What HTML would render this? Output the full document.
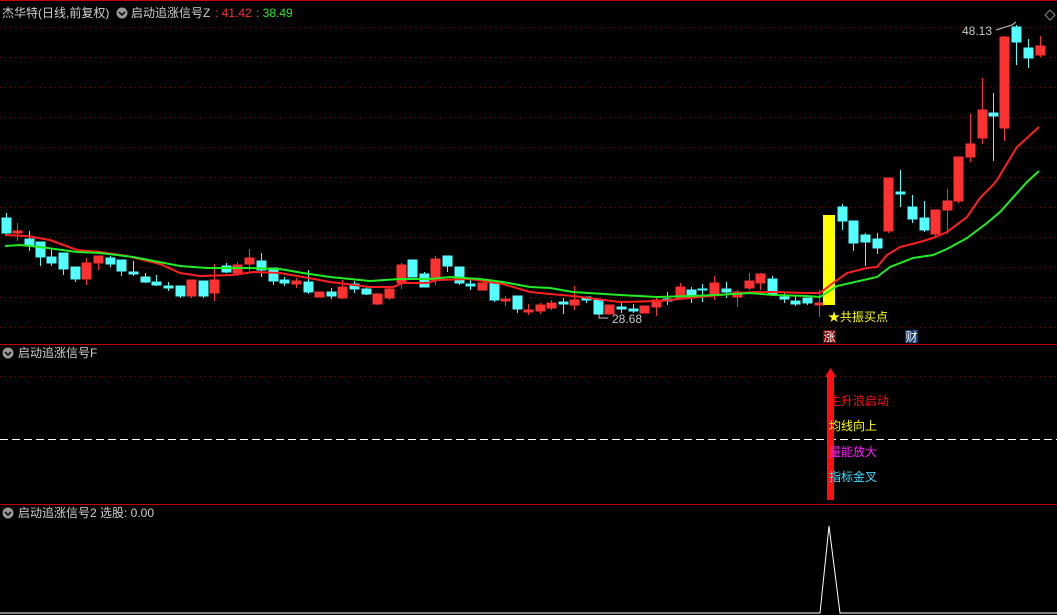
<!DOCTYPE html>
<html><head><meta charset="utf-8"><style>
html,body{margin:0;padding:0;background:#000;width:1057px;height:615px;overflow:hidden}
svg{display:block}
text{font-family:"Liberation Sans","Noto Sans CJK SC",sans-serif;font-size:12px}
</style></head><body>
<svg width="1057" height="615" viewBox="0 0 1057 615" xmlns="http://www.w3.org/2000/svg">
<rect width="1057" height="615" fill="#000"/>
<g stroke="#8a0000" stroke-width="1" stroke-dasharray="1,4">
<line x1="0" y1="27.5" x2="1057" y2="27.5"/><line x1="0" y1="57.5" x2="1057" y2="57.5"/><line x1="0" y1="87.5" x2="1057" y2="87.5"/><line x1="0" y1="117.5" x2="1057" y2="117.5"/><line x1="0" y1="147.5" x2="1057" y2="147.5"/><line x1="0" y1="177.5" x2="1057" y2="177.5"/><line x1="0" y1="207.5" x2="1057" y2="207.5"/><line x1="0" y1="237.5" x2="1057" y2="237.5"/><line x1="0" y1="267.5" x2="1057" y2="267.5"/><line x1="0" y1="297.5" x2="1057" y2="297.5"/><line x1="0" y1="327.5" x2="1057" y2="327.5"/>
<line x1="0" y1="376.5" x2="1057" y2="376.5"/>
</g>
<line x1="0" y1="344.5" x2="1057" y2="344.5" stroke="#c00000"/>
<line x1="0" y1="504.5" x2="1057" y2="504.5" stroke="#c00000"/>
<line x1="0" y1="0.5" x2="1057" y2="0.5" stroke="#c00000"/>
<line x1="0" y1="439.5" x2="1057" y2="439.5" stroke="#fff" stroke-dasharray="8,4"/>
<g fill="#54ffff" stroke="#54ffff">
<line x1="6.5" y1="213" x2="6.5" y2="236"/><rect x="2" y="218" width="9" height="15"/>
<line x1="29.5" y1="231" x2="29.5" y2="251"/><rect x="25" y="239" width="9" height="7"/>
<line x1="40.5" y1="242" x2="40.5" y2="266"/><rect x="36" y="242" width="9" height="15"/>
<line x1="51.5" y1="248" x2="51.5" y2="266"/><rect x="47" y="257" width="9" height="6"/>
<line x1="63.5" y1="253" x2="63.5" y2="275"/><rect x="59" y="253" width="9" height="16"/>
<line x1="75.5" y1="267" x2="75.5" y2="282"/><rect x="71" y="267" width="9" height="12"/>
<line x1="110.5" y1="256" x2="110.5" y2="267"/><rect x="106" y="258" width="9" height="6"/>
<line x1="121.5" y1="260" x2="121.5" y2="276"/><rect x="117" y="260" width="9" height="11"/>
<line x1="133.5" y1="261" x2="133.5" y2="276"/><rect x="129" y="272" width="9" height="2"/>
<line x1="145.5" y1="273" x2="145.5" y2="283"/><rect x="141" y="277" width="9" height="5"/>
<line x1="156.5" y1="275" x2="156.5" y2="286"/><rect x="152" y="282" width="9" height="3"/>
<line x1="168.5" y1="282" x2="168.5" y2="291"/><rect x="164" y="286" width="9" height="2"/>
<line x1="180.5" y1="286" x2="180.5" y2="298"/><rect x="176" y="286" width="9" height="10"/>
<line x1="203.5" y1="281" x2="203.5" y2="298"/><rect x="199" y="281" width="9" height="15"/>
<line x1="226.5" y1="263" x2="226.5" y2="273"/><rect x="222" y="266" width="9" height="6"/>
<line x1="261.5" y1="253" x2="261.5" y2="277"/><rect x="257" y="261" width="9" height="9"/>
<line x1="273.5" y1="268" x2="273.5" y2="285"/><rect x="269" y="268" width="9" height="13"/>
<line x1="284.5" y1="277" x2="284.5" y2="286"/><rect x="280" y="280" width="9" height="3"/>
<line x1="308.5" y1="270" x2="308.5" y2="294"/><rect x="304" y="282" width="9" height="10"/>
<line x1="331.5" y1="288" x2="331.5" y2="299"/><rect x="327" y="292" width="9" height="4"/>
<line x1="354.5" y1="281" x2="354.5" y2="293"/><rect x="350" y="284" width="9" height="5"/>
<line x1="366.5" y1="286" x2="366.5" y2="295"/><rect x="362" y="289" width="9" height="5"/>
<line x1="412.5" y1="260" x2="412.5" y2="277"/><rect x="408" y="260" width="9" height="17"/>
<line x1="424.5" y1="272" x2="424.5" y2="287"/><rect x="420" y="274" width="9" height="13"/>
<line x1="447.5" y1="256" x2="447.5" y2="272"/><rect x="443" y="256" width="9" height="10"/>
<line x1="459.5" y1="267" x2="459.5" y2="285"/><rect x="455" y="267" width="9" height="16"/>
<line x1="470.5" y1="279" x2="470.5" y2="290"/><rect x="466" y="284" width="9" height="2"/>
<line x1="494.5" y1="282" x2="494.5" y2="302"/><rect x="490" y="282" width="9" height="18"/>
<line x1="517.5" y1="296" x2="517.5" y2="313"/><rect x="513" y="296" width="9" height="13"/>
<line x1="563.5" y1="298" x2="563.5" y2="314"/><rect x="559" y="302" width="9" height="2"/>
<line x1="586.5" y1="297" x2="586.5" y2="303"/><rect x="582" y="297" width="9" height="3"/>
<line x1="598.5" y1="300" x2="598.5" y2="314"/><rect x="594" y="300" width="9" height="14"/>
<line x1="621.5" y1="303" x2="621.5" y2="313"/><rect x="617" y="307" width="9" height="2"/>
<line x1="633.5" y1="304" x2="633.5" y2="313"/><rect x="629" y="309" width="9" height="2"/>
<line x1="667.5" y1="292" x2="667.5" y2="305"/><rect x="663" y="299" width="9" height="2"/>
<line x1="691.5" y1="287" x2="691.5" y2="303"/><rect x="687" y="290" width="9" height="7"/>
<line x1="702.5" y1="284" x2="702.5" y2="302"/><rect x="698" y="289" width="9" height="1"/>
<line x1="726.5" y1="282" x2="726.5" y2="298"/><rect x="722" y="289" width="9" height="3"/>
<line x1="772.5" y1="276" x2="772.5" y2="295"/><rect x="768" y="279" width="9" height="16"/>
<line x1="784.5" y1="293" x2="784.5" y2="303"/><rect x="780" y="297" width="9" height="2"/>
<line x1="795.5" y1="296" x2="795.5" y2="306"/><rect x="791" y="301" width="9" height="3"/>
<line x1="807.5" y1="298" x2="807.5" y2="305"/><rect x="803" y="298" width="9" height="5"/>
<line x1="842.5" y1="204" x2="842.5" y2="230"/><rect x="838" y="207" width="9" height="14"/>
<line x1="853.5" y1="221" x2="853.5" y2="251"/><rect x="849" y="221" width="9" height="22"/>
<line x1="865.5" y1="233" x2="865.5" y2="266"/><rect x="861" y="235" width="9" height="7"/>
<line x1="877.5" y1="233" x2="877.5" y2="254"/><rect x="873" y="239" width="9" height="9"/>
<line x1="900.5" y1="170" x2="900.5" y2="207"/><rect x="896" y="192" width="9" height="2"/>
<line x1="912.5" y1="195" x2="912.5" y2="223"/><rect x="908" y="207" width="9" height="12"/>
<line x1="924.5" y1="201" x2="924.5" y2="232"/><rect x="920" y="218" width="9" height="12"/>
<line x1="993.5" y1="93" x2="993.5" y2="161"/><rect x="989" y="113" width="9" height="3"/>
<line x1="1016.5" y1="25" x2="1016.5" y2="65"/><rect x="1012" y="27" width="9" height="15"/>
<line x1="1028.5" y1="39" x2="1028.5" y2="68"/><rect x="1024" y="48" width="9" height="10"/>
</g>
<g fill="#ff3232" stroke="#ff3232">
<line x1="17.5" y1="223" x2="17.5" y2="241"/><rect x="13" y="231" width="9" height="2"/>
<line x1="86.5" y1="258" x2="86.5" y2="285"/><rect x="82" y="263" width="9" height="16"/>
<line x1="98.5" y1="256" x2="98.5" y2="270"/><rect x="94" y="256" width="9" height="7"/>
<line x1="191.5" y1="280" x2="191.5" y2="298"/><rect x="187" y="280" width="9" height="16"/>
<line x1="214.5" y1="264" x2="214.5" y2="301"/><rect x="210" y="280" width="9" height="13"/>
<line x1="237.5" y1="262" x2="237.5" y2="276"/><rect x="233" y="265" width="9" height="8"/>
<line x1="249.5" y1="249" x2="249.5" y2="271"/><rect x="245" y="258" width="9" height="6"/>
<line x1="296.5" y1="278" x2="296.5" y2="288"/><rect x="292" y="281" width="9" height="3"/>
<line x1="319.5" y1="292" x2="319.5" y2="297"/><rect x="315" y="292" width="9" height="5"/>
<line x1="342.5" y1="280" x2="342.5" y2="299"/><rect x="338" y="287" width="9" height="11"/>
<line x1="377.5" y1="293" x2="377.5" y2="305"/><rect x="373" y="294" width="9" height="10"/>
<line x1="389.5" y1="286" x2="389.5" y2="300"/><rect x="385" y="289" width="9" height="9"/>
<line x1="401.5" y1="263" x2="401.5" y2="289"/><rect x="397" y="265" width="9" height="18"/>
<line x1="435.5" y1="256" x2="435.5" y2="285"/><rect x="431" y="259" width="9" height="21"/>
<line x1="482.5" y1="283" x2="482.5" y2="290"/><rect x="478" y="283" width="9" height="7"/>
<line x1="505.5" y1="296" x2="505.5" y2="306"/><rect x="501" y="299" width="9" height="2"/>
<line x1="528.5" y1="304" x2="528.5" y2="315"/><rect x="524" y="310" width="9" height="2"/>
<line x1="540.5" y1="303" x2="540.5" y2="314"/><rect x="536" y="305" width="9" height="6"/>
<line x1="551.5" y1="300" x2="551.5" y2="310"/><rect x="547" y="303" width="9" height="5"/>
<line x1="574.5" y1="286" x2="574.5" y2="310"/><rect x="570" y="300" width="9" height="5"/>
<line x1="609.5" y1="305" x2="609.5" y2="314"/><rect x="605" y="305" width="9" height="9"/>
<line x1="644.5" y1="306" x2="644.5" y2="313"/><rect x="640" y="306" width="9" height="7"/>
<line x1="656.5" y1="298" x2="656.5" y2="316"/><rect x="652" y="300" width="9" height="7"/>
<line x1="680.5" y1="283" x2="680.5" y2="300"/><rect x="676" y="287" width="9" height="11"/>
<line x1="714.5" y1="276" x2="714.5" y2="300"/><rect x="710" y="283" width="9" height="12"/>
<line x1="737.5" y1="290" x2="737.5" y2="307"/><rect x="733" y="292" width="9" height="5"/>
<line x1="749.5" y1="273" x2="749.5" y2="290"/><rect x="745" y="281" width="9" height="7"/>
<line x1="760.5" y1="273" x2="760.5" y2="290"/><rect x="756" y="274" width="9" height="9"/>
<line x1="819.5" y1="290" x2="819.5" y2="317"/><rect x="815" y="303" width="9" height="2"/>
<line x1="888.5" y1="178" x2="888.5" y2="233"/><rect x="884" y="178" width="9" height="53"/>
<line x1="935.5" y1="210" x2="935.5" y2="237"/><rect x="931" y="210" width="9" height="24"/>
<line x1="947.5" y1="189" x2="947.5" y2="234"/><rect x="943" y="201" width="9" height="9"/>
<line x1="958.5" y1="157" x2="958.5" y2="203"/><rect x="954" y="157" width="9" height="44"/>
<line x1="970.5" y1="114" x2="970.5" y2="162"/><rect x="966" y="144" width="9" height="13"/>
<line x1="982.5" y1="78" x2="982.5" y2="144"/><rect x="978" y="110" width="9" height="28"/>
<line x1="1004.5" y1="36" x2="1004.5" y2="141"/><rect x="1000" y="37" width="9" height="91"/>
<line x1="1040.5" y1="36" x2="1040.5" y2="57"/><rect x="1036" y="46" width="9" height="9"/>
</g>
<rect x="823" y="215" width="12" height="90" fill="#ffff00"/>
<polyline fill="none" stroke="#ff2020" stroke-width="2" points="5,235 27,236 50,240 77,250 100,252 127,256 160,264 180,273 200,276 233,275 253,272 280,273 303,277 330,282 370,287 393,287 403,283 427,283 437,280 470,279 503,284 530,292 550,294 573,296 620,302 660,301 690,298 720,295 753,292 773,292 807,293 820,293 833,283 847,273 867,268 877,267 887,255 900,247 920,242 933,238 947,232 967,217 980,198 993,185 997,180 1017,147 1039,127"/>
<polyline fill="none" stroke="#20ee20" stroke-width="2" points="5,246 20,245 40,247 77,252 100,253 133,257 180,266 207,268 250,268 280,269 303,273 330,277 370,281 400,279 430,279 450,277 480,279 503,282 530,287 550,288 573,292 620,295 657,297 690,296 717,295 750,293 773,295 807,296 820,297 837,286 877,277 890,267 913,258 933,255 947,249 967,238 987,223 1000,212 1027,182 1039,171"/>
<text x="612" y="323" fill="#c8c8c8">28.68</text>
<polyline points="608,318 599,318 599,313" fill="none" stroke="#c8c8c8"/>
<text x="962" y="35" fill="#c8c8c8">48.13</text>
<polyline points="996,30 1012,25 1016,22" fill="none" stroke="#c8c8c8"/>
<path d="M1050,10 l5,5 -5,5 -5,-5z" fill="none" stroke="#888"/>
<text x="828" y="321" fill="#ffff00">★共振买点</text>
<rect x="823" y="330" width="13" height="13" fill="#7a0000"/>
<text x="823.5" y="341" fill="#fff">涨</text>
<rect x="905" y="330" width="13" height="13" fill="#103a70"/>
<text x="905.5" y="341" fill="#fff">财</text>
<text x="2" y="17" fill="#d0d0d0">杰华特(日线,前复权)</text>
<circle cx="122" cy="13" r="5.5" fill="#999"/><path d="M119,12 l3,3 3,-3" stroke="#000" stroke-width="1.5" fill="none"/>
<text x="131" y="17" fill="#d0d0d0">启动追涨信号Z</text>
<text x="215" y="17" fill="#ff3232">: 41.42</text>
<text x="256" y="17" fill="#20ee20">: 38.49</text>
<circle cx="8" cy="353" r="5.5" fill="#999"/><path d="M5,352 l3,3 3,-3" stroke="#000" stroke-width="1.5" fill="none"/>
<text x="18" y="357" fill="#d0d0d0">启动追涨信号F</text>
<rect x="827" y="376" width="7" height="124" fill="#ff1010"/>
<path d="M825,377 L830.5,368 L836,377Z" fill="#ff1010"/>
<text x="829" y="405" fill="#ff1010">主升浪启动</text>
<text x="829" y="430" fill="#ffff00">均线向上</text>
<text x="829" y="456" fill="#ff20ff">量能放大</text>
<text x="829" y="481" fill="#40e0ff">指标金叉</text>
<circle cx="8" cy="513" r="5.5" fill="#999"/><path d="M5,512 l3,3 3,-3" stroke="#000" stroke-width="1.5" fill="none"/>
<text x="18" y="517" fill="#d0d0d0">启动追涨信号2 选股: 0.00</text>
<polyline points="0,613 820,613 829,526 840,613 1057,613" fill="none" stroke="#fff" stroke-width="1"/>
</svg>
</body></html>
